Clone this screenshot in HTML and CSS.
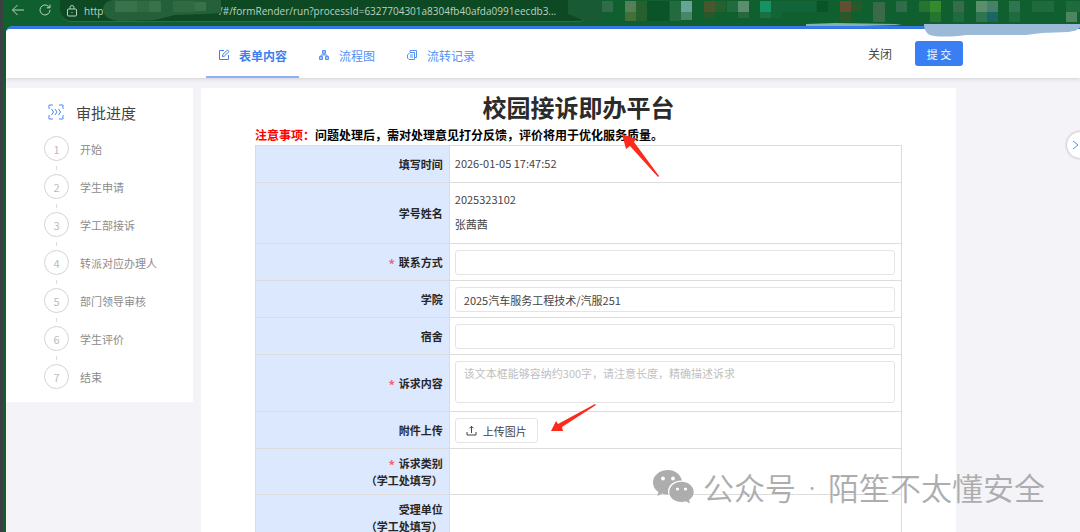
FILE: index.html
```html
<!DOCTYPE html>
<html lang="zh-CN">
<head>
<meta charset="utf-8">
<title>校园接诉即办平台</title>
<link rel="stylesheet" href="styles.css">
</head>

<body>
<div class="browser">
	<div class="toolbar">
		<button class="nav" aria-label="返回">
			<svg width="14" height="14" viewBox="0 0 14 14"><path d="M13 7H1.500M6.500 2L1.500 7l5 5"/></svg>
		</button>
		<button class="nav" aria-label="刷新">
			<svg width="14" height="14" viewBox="0 0 14 14"><path d="M12 7a5 5 0 1 1-1.500-3.600L12 4.800M12 1.500v3.300H8.700"/></svg>
		</button>
		<div class="address">
			<svg width="12" height="14" viewBox="0 0 12 14"><path d="M2.500 5h7a1 1 0 0 1 1 1v5a1 1 0 0 1-1 1h-7a1 1 0 0 1-1-1V6a1 1 0 0 1 1-1zM4 5V3.500a2 2 0 0 1 4 0V5M5.500 8.500h1"/></svg>
			<span class="scheme">http</span>
			<span class="url">/#/formRender/run?processId=6327704301a8304fb40afda0991eecdb3...</span>
			<svg class="smudge" width="122" height="22" viewBox="0 0 122 22">
				<path fill="#24603a" d="M10 0h108v13l-16 1-30 1-20 5-34 1c-12 0-18-6-18-11S3 1 10 0z"/>
				<path fill="#39714b" d="M12 1h22v11H12zM46 1h12v11H46zM92 2h11v9H92z"/>
				<path fill="#2f6a42" d="M34 1h12v11H34zM70 1h22v11H70z"/>
			</svg>
		</div>
		<svg class="mosaic" width="512" height="26" viewBox="0 0 512 26">
			<path fill="#185a33" d="M0 0h36v22H20L0 14z"/>
			<path fill="#306b4b" d="M34 1h11v11H34zM328 1h11v11h-11z"/>
			<path fill="#547f59" d="M57 1h11v11H57z"/>
			<path fill="#436f3b" d="M57 12h11v9H57z"/>
			<path fill="#25602d" d="M68 1h11v20H68zM147 1h11v11h-11z"/>
			<path fill="#0b5328" d="M79 1h22v20H79zM249 1h11v11h-11z"/>
			<path fill="#216b3f" d="M102 1h11v20h-11zM159 1h11v11h-11z"/>
			<path fill="#67a39b" d="M113 1h11v11h-11z"/>
			<path fill="#478768" d="M113 12h11v8h-11z"/>
			<path fill="#48572f" d="M136 1h11v11h-11z"/>
			<path fill="#2a5829" d="M136 12h11v6h-11zM272 12h11v10h-11zM283 1h11v11h-11z"/>
			<path fill="#5c8e6d" d="M170 1h11v11h-11zM408 1h11v11h-11z"/>
			<path fill="#27683f" d="M170 12h11v6h-11z"/>
			<path fill="#169363" d="M192 1h11v11h-11z"/>
			<path fill="#167149" d="M192 12h11v6h-11z"/>
			<path fill="#126439" d="M203 1h11v17h-11zM214 1h34v11h-34z"/>
			<path fill="#634e32" d="M272 1h11v11h-11z"/>
			<path fill="#396a4a" d="M305 2h12v20h-12zM385 1h11v11h-11z"/>
			<path fill="#25742f" d="M351 1h11v11h-11zM362 12h11v10h-11z"/>
			<path fill="#348b2d" d="M362 1h11v11h-11z"/>
			<path fill="#44806a" d="M419 1h11v11h-11z"/>
			<path fill="#2f754f" d="M408 12h11v10h-11zM441 1h11v11h-11z"/>
			<path fill="#1b6564" d="M419 12h11v10h-11z"/>
			<path fill="#1f6b3d" d="M385 12h11v10h-11zM441 12h11v10h-11zM464 1h22v11h-22zM498 1h14v11h-14z"/>
			<path fill="#4c8560" d="M498 12h11v10h-11z"/>
			<path fill="#7fb4b0" d="M238 24l30-1 60 1 6 1-40 1h-56z"/>
		</svg>
	</div>

	<div class="page">
		<header class="header">
			<nav class="tabs">
				<a class="tab active" href="#form">
					<svg width="12" height="12" viewBox="0 0 12 12"><path d="M6 1.500H1.500v9h9V6M4.500 7.500l.3-2L9.500 1l1.500 1.500-4.700 4.700z"/></svg>
					表单内容
				</a>
				<a class="tab" href="#flow">
					<svg width="12" height="12" viewBox="0 0 12 12"><path fill="#a9c6fa" d="M4.500 1.500h3v3h-3zM1.500 7.500h3v3h-3zM7.500 7.500h3v3h-3z"/><path d="M6 4.500V6M3 7.500V6h6v1.500"/></svg>
					流程图
				</a>
				<a class="tab" href="#record">
					<svg width="12" height="12" viewBox="0 0 12 12"><path d="M4 3V1.500h6.500v7H9M4 3.500h4.500v7H3L1.500 9V6zM4 6h3M4 8h3"/></svg>
					流转记录
				</a>
			</nav>
			<div class="actions">
				<button class="close">关闭</button>
				<button class="submit">提 交</button>
			</div>
			<svg class="brush" width="156" height="14" viewBox="0 0 156 14"><path fill="#9bbad8" d="M0 0h156v3c-3 4-6 4-12 5l-26 1-16 2-60 0c-14 2-30 2-36 0C2 9 0 5 0 0z"/></svg>
		</header>

		<div class="content">
			<aside class="progress">
				<h2>
					<svg width="16" height="16" viewBox="0 0 16 16"><path d="M1 5V1h4M11 1h4v4M15 11v4h-4M5 15H1v-4M3.500 5l2 3-2 3M7 5l2 3-2 3M10.500 5l2 3-2 3"/></svg>
					审批进度
				</h2>
				<ol class="steps">
					<li><span class="num">1</span>开始</li>
					<li><span class="num">2</span>学生申请</li>
					<li><span class="num">3</span>学工部接诉</li>
					<li><span class="num">4</span>转派对应办理人</li>
					<li><span class="num">5</span>部门领导审核</li>
					<li><span class="num">6</span>学生评价</li>
					<li><span class="num">7</span>结束</li>
				</ol>
			</aside>

			<main class="main">
				<h1>校园接诉即办平台</h1>
				<p class="notice"><span class="red">注意事项：</span>问题处理后，需对处理意见打分反馈，评价将用于优化服务质量。</p>
				<table class="form">
					<tr>
						<th>填写时间</th>
						<td class="text">2026-01-05 17:47:52</td>
					</tr>
					<tr>
						<th>学号姓名</th>
						<td class="text"><p class="line">2025323102</p><p class="line">张茜茜</p></td>
					</tr>
					<tr>
						<th><label class="required" for="phone">联系方式</label></th>
						<td><input type="text" id="phone"></td>
					</tr>
					<tr>
						<th><label for="college">学院</label></th>
						<td><input type="text" id="college" value="2025汽车服务工程技术/汽服251"></td>
					</tr>
					<tr>
						<th><label for="dorm">宿舍</label></th>
						<td><input type="text" id="dorm"></td>
					</tr>
					<tr>
						<th><label class="required" for="appeal">诉求内容</label></th>
						<td><textarea id="appeal" placeholder="该文本框能够容纳约300字，请注意长度，精确描述诉求"></textarea></td>
					</tr>
					<tr>
						<th>附件上传</th>
						<td>
							<button class="upload">
								<svg width="11" height="11" viewBox="0 0 11 11"><path d="M1 7v3h9V7M5.500 8V1.500M3.500 3.300l2-2 2 2"/></svg>
								上传图片
							</button>
						</td>
					</tr>
					<tr>
						<th><span class="required">诉求类别</span><br>（学工处填写）</th>
						<td></td>
					</tr>
					<tr>
						<th>受理单位<br>（学工处填写）</th>
						<td></td>
					</tr>
				</table>
				<svg class="arrow arrow-notice" width="40" height="46" viewBox="0 0 40 46"><path fill="#fb2a1c" d="M0 0l14 5-2 3 25 34-1 1L8 12l-4 3z"/></svg>
				<svg class="arrow arrow-upload" width="46" height="30" viewBox="0 0 46 30"><path fill="#fb2a1c" d="M0 28l5-10 2 3L44 1l1 1-34 22 1 4z"/></svg>
			</main>
		</div>

		<button class="expand" aria-label="展开">
			<svg width="8" height="10" viewBox="0 0 8 10"><path d="M1 1l5 4-5 4"/></svg>
		</button>
	</div>

	<div class="watermark">
		<svg width="42" height="34" viewBox="0 0 42 34">
			<path fill="#adadad" d="M15 0C6.500 0 0 5.500 0 12.500c0 4 2 7.300 5.500 9.500L4.300 26l5-2.500c2 .7 4 1 6 .9C13.500 16 20 10.500 29 10.600 27.500 4.500 22 0 15 0z"/>
			<path fill="#adadad" d="M28.500 11.800c-7 0-12.200 4.500-12.200 10.300S21.500 32 28.500 32c1.500 0 3-.2 4.300-.7L37 33.500l-1-3.500c3-2 4.700-4.700 4.700-7.900 0-5.800-5.400-10.300-12.200-10.300z"/>
			<g fill="#fff"><circle cx="10" cy="8.500" r="1.900"/><circle cx="20" cy="8.500" r="1.900"/><circle cx="24.500" cy="19" r="1.600"/><circle cx="32.500" cy="19" r="1.600"/></g>
		</svg>
		<span>公众号</span>
		<span class="dot">·</span>
		<span>陌笙不太懂安全</span>
	</div>
</div>
</body>
</html>
```
FILE: styles.css
```css
* {
	box-sizing: border-box;
}
body {
	margin: 0;
	font-family: "Noto Sans CJK SC", "Noto Sans", sans-serif;
	font-size: 11px;
	color: #444;
}
button, input, textarea {
	font-family: inherit;
	font-size: inherit;
	color: inherit;
}
button {
	border: 0;
	padding: 0;
	background: none;
}
h1, h2, p, ol {
	margin: 0;
	padding: 0;
}
svg {
	display: block;
	flex: none;
	fill: none;
	stroke: currentColor;
}
.smudge, .mosaic, .brush, .arrow, .watermark svg {
	stroke: none;
}

/* browser frame */
.browser {
	position: relative;
	height: 100vh;
	overflow: hidden;
	display: flex;
	flex-direction: column;
	background: #0f5f2f;
	border-left: 3px solid #3b4042;
	padding-left: 3px;
}
.toolbar {
	position: relative;
	flex: none;
	height: 26px;
	display: flex;
	align-items: flex-start;
	color: #b9d2c1;
}
.nav {
	width: 14px;
	height: 20px;
	margin-left: 5px;
	margin-right: 8px;
}
.address {
	position: relative;
	display: flex;
	align-items: center;
	width: 530px;
	height: 22px;
	padding-left: 6px;
	border-radius: 0 0 12px 12px;
	background: #0d4a24;
	border-bottom: 1px solid #2a7045;
	font-family: "Open Sans", "Noto Sans", sans-serif;
	font-size: 10px;
	white-space: nowrap;
}
.scheme {
	flex: none;
	margin-left: 6px;
	width: 135px;
}
.smudge {
	position: absolute;
	left: 43px;
	top: 0;
}
.mosaic {
	position: absolute;
	right: 0;
	top: 0;
}

/* page */
.page {
	position: relative;
	flex: 1;
	min-height: 0;
	background: #f3f3f8;
	border-top: 3px solid #387ae8;
	border-top-left-radius: 6px;
}
.header {
	position: relative;
	height: 49px;
	display: flex;
	justify-content: space-between;
	background: #fff;
	border-top-left-radius: 4px;
	box-shadow: 0 1px 4px rgba(0, 0, 0, 0.15);
}
.tabs {
	display: flex;
	gap: 7px;
	margin-left: 200px;
}
.tab {
	display: flex;
	align-items: center;
	gap: 9px;
	padding: 5px 12px 0;
	font-size: 12px;
	color: #5590f5;
	text-decoration: none;
	border-bottom: 2px solid transparent;
}
.tab.active {
	font-weight: bold;
	color: #3d7ff0;
	border-color: #8ab2f5;
}
.actions {
	display: flex;
	align-items: center;
	gap: 23px;
	margin-right: 117px;
}
.close {
	font-size: 12px;
}
.submit {
	width: 48px;
	height: 25px;
	border-radius: 3px;
	background: #397ef2;
	color: #fff;
}
.brush {
	position: absolute;
	right: 0;
	top: -5px;
}
.content {
	display: flex;
	align-items: flex-start;
	gap: 8px;
	margin-top: 10px;
	padding-right: 124px;
}

/* approval progress */
.progress {
	flex: none;
	width: 187px;
	padding: 14px 0 13px 38px;
	background: #fff;
}
.progress h2 {
	display: flex;
	align-items: center;
	gap: 12px;
	height: 20px;
	margin-bottom: 14px;
	padding-left: 4px;
	font-size: 15px;
	font-weight: normal;
}
.progress h2 svg {
	color: #4a88f2;
}
.steps {
	list-style: none;
	display: flex;
	flex-direction: column;
	gap: 13px;
}
.steps li {
	position: relative;
	display: flex;
	align-items: center;
	gap: 11px;
	color: #8c8c8c;
}
.steps li + li::before {
	content: "";
	position: absolute;
	left: 12px;
	top: -8px;
	width: 1px;
	height: 4px;
	background: #ddd;
}
.num {
	display: flex;
	align-items: center;
	justify-content: center;
	width: 25px;
	height: 25px;
	border: 1px solid #d4d4d4;
	border-radius: 50%;
	color: #bbb;
}

/* form */
.main {
	position: relative;
	flex: 1;
	padding: 0 54px;
	background: #fff;
}
.main h1 {
	font-size: 24px;
	line-height: 37px;
	text-align: center;
	color: #2b2b2b;
}
.notice {
	padding-bottom: 1px;
	font-size: 12px;
	line-height: 19px;
	font-weight: bold;
	color: #000;
}
.red {
	color: #f00;
}
.form {
	width: 100%;
	border-collapse: collapse;
	table-layout: fixed;
	line-height: 17px;
}
.form th, .form td {
	height: 37px;
	padding: 6px 6px 5px 5px;
	border: 1px solid #dcdcdc;
}
.form .text {
	padding-top: 4px;
	padding-bottom: 6px;
}
.form th {
	width: 30%;
	background: #dce8fe;
	text-align: right;
	color: #262626;
}
.required::before {
	content: "*";
	margin-right: 4px;
	font-family: "Noto Sans", sans-serif;
	color: #f5606f;
}
.line {
	line-height: 25px;
}
.form input, .form textarea {
	display: block;
	width: 100%;
	height: 25px;
	padding: 0 8px;
	border: 1px solid #e4e4e4;
	border-radius: 3px;
	background: #fff;
}
.form textarea {
	height: 42px;
	margin-bottom: 3px;
	padding-top: 3px;
	resize: none;
}
.form textarea::placeholder {
	color: #bfbfbf;
}
.upload {
	display: flex;
	align-items: center;
	gap: 6px;
	height: 25px;
	padding: 0 10px;
	border: 1px solid #e4e4e4;
	border-radius: 3px;
}
.arrow {
	position: absolute;
}
.arrow-notice {
	left: 421px;
	top: 46px;
}
.arrow-upload {
	left: 350px;
	top: 315px;
}

.expand {
	position: absolute;
	right: -13px;
	top: 103px;
	width: 26px;
	height: 26px;
	padding-left: 5px;
	border-radius: 50%;
	background: #fff;
	color: #5590f5;
	box-shadow: 0 0 3px rgba(0, 0, 0, 0.35);
}
.watermark {
	position: absolute;
	right: 35px;
	bottom: 25px;
	display: flex;
	align-items: center;
	gap: 8px;
	font-size: 31px;
	font-weight: 350;
	line-height: 40px;
	color: #adadad;
}
.dot {
	width: 16px;
	font-family: "Noto Sans", sans-serif;
	text-align: center;
}
```
